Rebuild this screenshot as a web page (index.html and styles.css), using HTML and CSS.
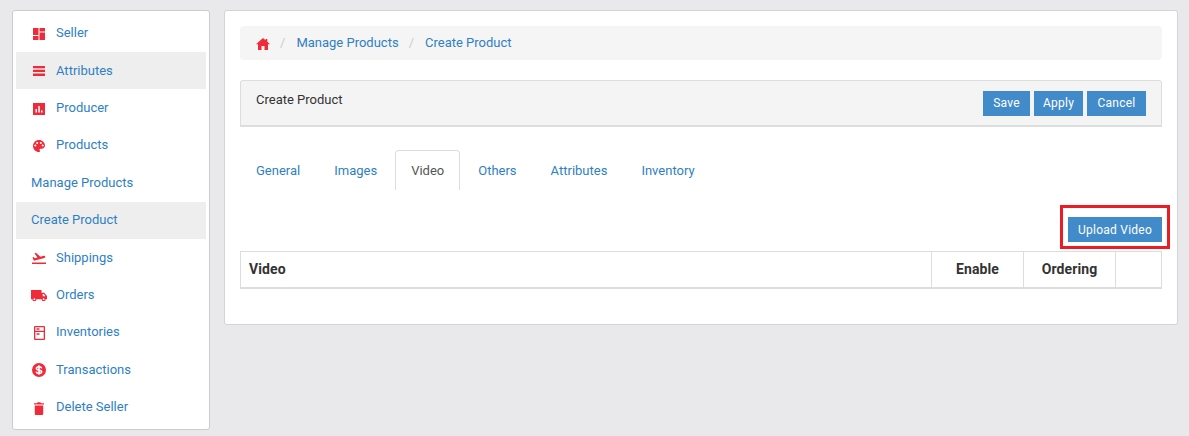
FILE: index.html
```html
<!DOCTYPE html>
<html lang="en">
<head>
<meta charset="utf-8">
<title>Create Product</title>
<link rel="stylesheet" href="styles.css">
</head>
<body>
<div class="page">
  <nav class="sidebar">
    <a class="item"><svg class="ic" viewBox="0 0 12 12"><path d="M0 0h5.500v7H0zM6.500 0H12v3.500H6.500zM6.500 4.500H12V12H6.500zM0 8h5.500v4H0z"/></svg>Seller</a>
    <a class="item active"><svg class="ic" viewBox="0 0 12 12"><path d="M0 1h12v2.300H0zM0 4.800h12v2.300H0zM0 8.600h12v2.300H0z"/></svg>Attributes</a>
    <a class="item"><svg class="ic" viewBox="0 0 12 12"><path fill-rule="evenodd" d="M0 0h12v12H0zM2.500 6v3.500h1.500V6zM5.300 3v6.500h1.500V3zM8 7.500v2h1.500v-2z"/></svg>Producer</a>
    <a class="item"><svg class="ic" viewBox="0 0 12 12"><path fill-rule="evenodd" d="M6 0C2.700 0 0 2.700 0 6s2.700 6 6 6c.6 0 1-.4 1-1 0-.3-.1-.5-.3-.7-.1-.2-.2-.4-.2-.6 0-.5.4-.9.9-.9h1.300C10.500 8.800 12 7.300 12 5.500 12 2.500 9.300 0 6 0zM2.300 6.500a1 1 0 1 1 0-2 1 1 0 0 1 0 2zM4.200 3.900a1 1 0 1 1 0-2 1 1 0 0 1 0 2zM7.800 3.900a1 1 0 1 1 0-2 1 1 0 0 1 0 2zM9.700 6.500a1 1 0 1 1 0-2 1 1 0 0 1 0 2z"/></svg>Products</a>
    <a class="item sub">Manage Products</a>
    <a class="item sub active">Create Product</a>
    <a class="item"><svg class="ic ship" viewBox="0 0 14 12"><path d="M0 10.500h14V12H0zM.5 5.500l1-.4 1.600 1.100 2.300-.6L2.500 1.200l1.400-.4 4.500 3.900 3.300-.9c.7-.2 1.400.2 1.500.8.200.6-.2 1.100-.8 1.300L1.800 8.700z"/></svg>Shippings</a>
    <a class="item"><svg class="ic truck" viewBox="0 0 16 12"><path fill-rule="evenodd" d="M0 1h10.500v2.800h2.700L16 7v3.200h-1.400a2 2 0 0 1-4 0H5.400a2 2 0 0 1-4 0H0zM11.700 5v2.200h2.800l-1.700-2.200zM3.400 9.300a.9.900 0 1 0 0 1.800.9.900 0 0 0 0-1.800zM12.600 9.300a.9.900 0 1 0 0 1.800.9.900 0 0 0 0-1.800z"/></svg>Orders</a>
    <a class="item"><svg class="ic fridge" viewBox="0 0 11 14"><path fill-rule="evenodd" d="M1 0h9a1 1 0 0 1 1 1v12a1 1 0 0 1-1 1H1a1 1 0 0 1-1-1V1a1 1 0 0 1 1-1zM1.300 1.300v3.400h8.400V1.300zM1.300 6v6.700h8.400V6zM2.500 2.300h3v1.400h-3zM2.500 7.300h3v1.400h-3z"/></svg>Inventories</a>
    <a class="item"><svg class="ic round" viewBox="0 0 14 14"><circle cx="7" cy="7" r="7"/><path class="cut" d="M9.700 5.300C9.500 4.200 8.400 3.700 7 3.700c-1.500 0-2.600.7-2.600 1.800 0 2.300 5.300 1 5.300 3.200 0 1.100-1.100 1.700-2.700 1.700s-2.600-.7-2.800-1.700M7 2.200v9.600"/></svg>Transactions</a>
    <a class="item"><svg class="ic trash" viewBox="0 0 10 13"><path d="M.8 3.500h8.400V12a1 1 0 0 1-1 1H1.800a1 1 0 0 1-1-1zM0 1.300h3L3.600.3h2.800l.6 1h3v1.300H0z"/></svg>Delete Seller</a>
  </nav>
  <main class="card">
    <div class="crumbs">
      <svg class="home" viewBox="0 0 14 12"><path d="M7 0l2.600 2.300V1h1.700v2.800L14 6.200h-2V12H8.500V8h-3v4H2V6.200H0z"/></svg>
      <span class="sep">/</span><a>Manage Products</a><span class="sep">/</span><a>Create Product</a>
    </div>
    <div class="toolbar">
      <div class="toolbar-title">Create Product</div>
      <div class="actions"><button class="btn save">Save</button><button class="btn apply">Apply</button><button class="btn cancel">Cancel</button></div>
    </div>
    <ul class="tabs">
      <li class="tab">General</li><li class="tab">Images</li><li class="tab current">Video</li><li class="tab">Others</li><li class="tab">Attributes</li><li class="tab">Inventory</li>
    </ul>
    <div class="upload-row">
      <button class="btn upload">Upload Video</button>
      <span class="highlight"></span>
    </div>
    <table class="grid">
      <thead><tr><th class="c-video">Video</th><th class="c-enable">Enable</th><th class="c-order">Ordering</th><th class="c-last"></th></tr></thead>
    </table>
  </main>
</div>
</body>
</html>
```
FILE: styles.css
```css
* { box-sizing: border-box; }
html, body { margin: 0; height: 100%; }
body {
  background: #e9e9eb;
  font-family: Roboto, "Liberation Sans", sans-serif;
  font-size: 13px;
  color: #333;
  overflow: hidden;
}
.page { display: flex; align-items: flex-start; gap: 14px; padding: 10px 11px 0 12px; }
.sidebar {
  width: 198px;
  height: 420px;
  flex: none;
  background: #fff;
  border: 1px solid #ccc;
  border-radius: 3px;
  padding: 3.600px 3px 0;
}
.item {
  display: flex;
  align-items: center;
  height: 37.400px;
  padding: 0 0 1px 15px;
  color: #2f7fc4;
}
.item.active { background: #eee; }
.ic { width: 12px; height: 12px; margin: 2px 11px 0 2px; fill: #ef2b3a; flex: none; }
.ic.ship { width: 14px; margin: 2px 10px 0 1px; }
.ic.truck { width: 16px; margin: 1px 9px 0 0; }
.ic.fridge { width: 11px; height: 14px; margin: 2px 11px 0 3px; }
.ic.round { width: 14px; height: 14px; margin: 1px 10px 0 1px; }
.ic.trash { width: 10px; height: 13px; margin: 3px 12px 0 3px; }
.cut { fill: none; stroke: #fff; stroke-width: 1.500; }
.card {
  flex: 1;
  height: 315px;
  background: #fff;
  border: 1px solid #d4d4d4;
  border-radius: 3px;
  padding: 15px;
}
.crumbs {
  display: flex;
  align-items: center;
  height: 34px;
  padding: 0 0 1px 16px;
  background: #f5f5f5;
  border-radius: 4px;
  color: #2f7fc4;
}
.home { width: 14px; height: 12px; fill: #ef2b3a; margin-top: 3px; }
.sep { color: #ccc; margin: 0 11px 0 10px; }
.home + .sep { margin-left: 10px; margin-right: 11px; }
.toolbar {
  display: flex;
  justify-content: space-between;
  height: 47px;
  margin-top: 20px;
  padding: 10px 15px;
  background: #f4f4f4;
  border: 1px solid #ddd;
  border-bottom-width: 2px;
  border-radius: 3px 3px 0 0;
}
.toolbar-title { color: #333; line-height: 17px; }
.actions { display: flex; gap: 4px; }
.btn {
  height: 25px;
  padding: 0;
  background: #428bca;
  border: 0;
  color: #fff;
  font: 12px/25px Roboto, "Liberation Sans", sans-serif;
  letter-spacing: .25px;
}
.save { width: 47px; }
.apply { width: 49px; }
.cancel { width: 59px; }
.tabs { display: flex; list-style: none; margin: 23px 0 0; padding: 0; height: 40px; }
.tab {
  padding: 0 15px;
  margin-right: 2px;
  line-height: 39px;
  border: 1px solid transparent;
  border-bottom: 0;
  color: #2f7fc4;
}
.tab.current { color: #555; border-color: #ddd; border-radius: 4px 4px 0 0; background: #fff; }
.upload-row { position: relative; display: flex; justify-content: flex-end; margin-top: 27px; }
.upload { width: 94px; padding: 1px 0 0; }
.highlight {
  position: absolute;
  right: -8px;
  top: -12px;
  width: 110px;
  height: 44px;
  border: 3px solid #ed1c24;
}
.grid {
  width: 100%;
  margin-top: 9px;
  border-collapse: collapse;
  table-layout: fixed;
  border: 1px solid #ddd;
  border-bottom-width: 2px;
}
.grid th {
  height: 36px;
  border-left: 1px solid #ddd;
  padding: 0 8px;
  font-size: 14px;
  font-weight: 700;
  color: #333;
  text-align: center;
  letter-spacing: .1px;
}
.grid .c-video { text-align: left; border-left: 0; }
.c-enable, .c-order, .c-last { width: 92px; }
.c-last { width: 46px; }
```
